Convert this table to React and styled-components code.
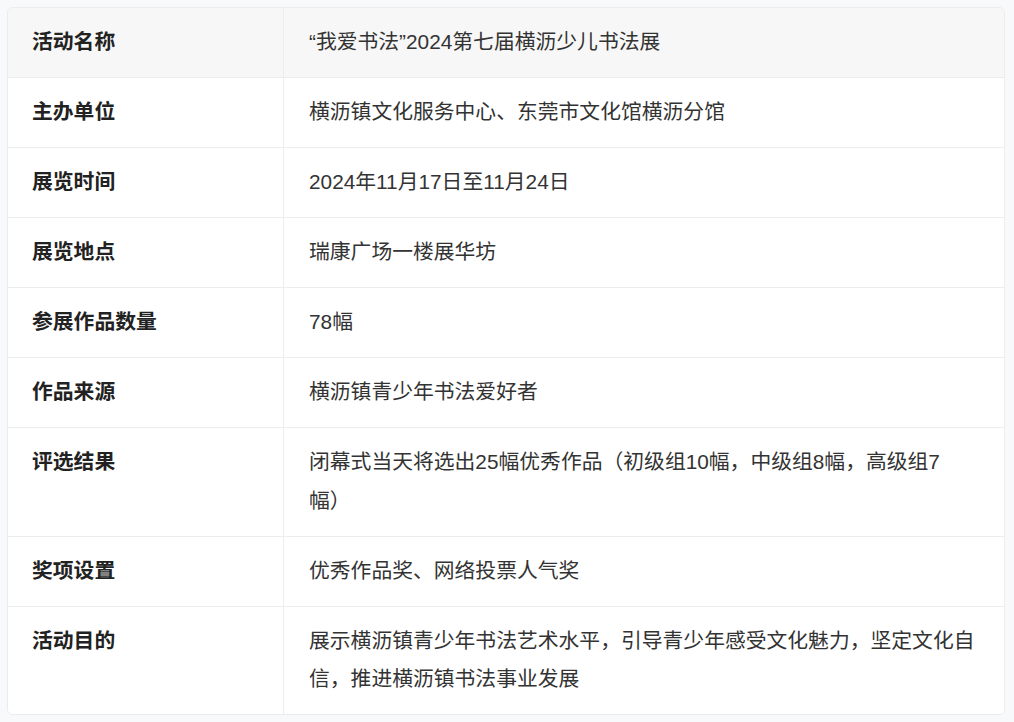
import React from "react";
import styled, { createGlobalStyle } from "styled-components";

const rows = [
  ["活动名称", "“我爱书法”2024第七届横沥少儿书法展"],
  ["主办单位", "横沥镇文化服务中心、东莞市文化馆横沥分馆"],
  ["展览时间", "2024年11月17日至11月24日"],
  ["展览地点", "瑞康广场一楼展华坊"],
  ["参展作品数量", "78幅"],
  ["作品来源", "横沥镇青少年书法爱好者"],
  ["评选结果", "闭幕式当天将选出25幅优秀作品（初级组10幅，中级组8幅，高级组7幅）"],
  ["奖项设置", "优秀作品奖、网络投票人气奖"],
  ["活动目的", "展示横沥镇青少年书法艺术水平，引导青少年感受文化魅力，坚定文化自信，推进横沥镇书法事业发展"],
];

const App = () => {
  return (
    <>
      <GlobalStyle />
      <Page>
        <Card>
          <Table>
            <tbody>
              {rows.map(([label, value], i) => (
                <Row key={label} $head={i === 0}>
                  <Label $first={i === 0}>{label}</Label>
                  <Value $first={i === 0}>{value}</Value>
                </Row>
              ))}
            </tbody>
          </Table>
        </Card>
      </Page>
    </>
  );
};

export default App;

const GlobalStyle = createGlobalStyle`
  body {
    margin: 0;
    background: #f8f9fb;
    font-family: "Liberation Sans", "Noto Sans CJK SC", sans-serif;
  }
`;

const Page = styled.div`
  padding: 7px 9px 6px 7px;
`;

const Card = styled.div`
  background: #fff;
  border: 1px solid #ececec;
  border-radius: 6px;
  overflow: hidden;
`;

const Table = styled.table`
  width: 100%;
  border-collapse: collapse;
  table-layout: fixed;
`;

const Row = styled.tr`
  background: ${(p) => (p.$head ? "#f7f7f7" : "#fff")};
`;

const Cell = styled.td`
  padding-top: 15.25px;
  padding-bottom: 15.25px;
  vertical-align: top;
  font-size: 20.8px;
  line-height: 38.5px;
  text-spacing-trim: space-all;
  border-top: ${(p) => (p.$first ? "none" : "1px solid #ededed")};
`;

const Label = styled(Cell)`
  width: 251px;
  padding-left: 24px;
  padding-right: 0;
  font-weight: 700;
  color: #222;
  border-right: 1px solid #ededed;
`;

const Value = styled(Cell)`
  padding-left: 25px;
  padding-right: 28px;
  color: #333;
`;
